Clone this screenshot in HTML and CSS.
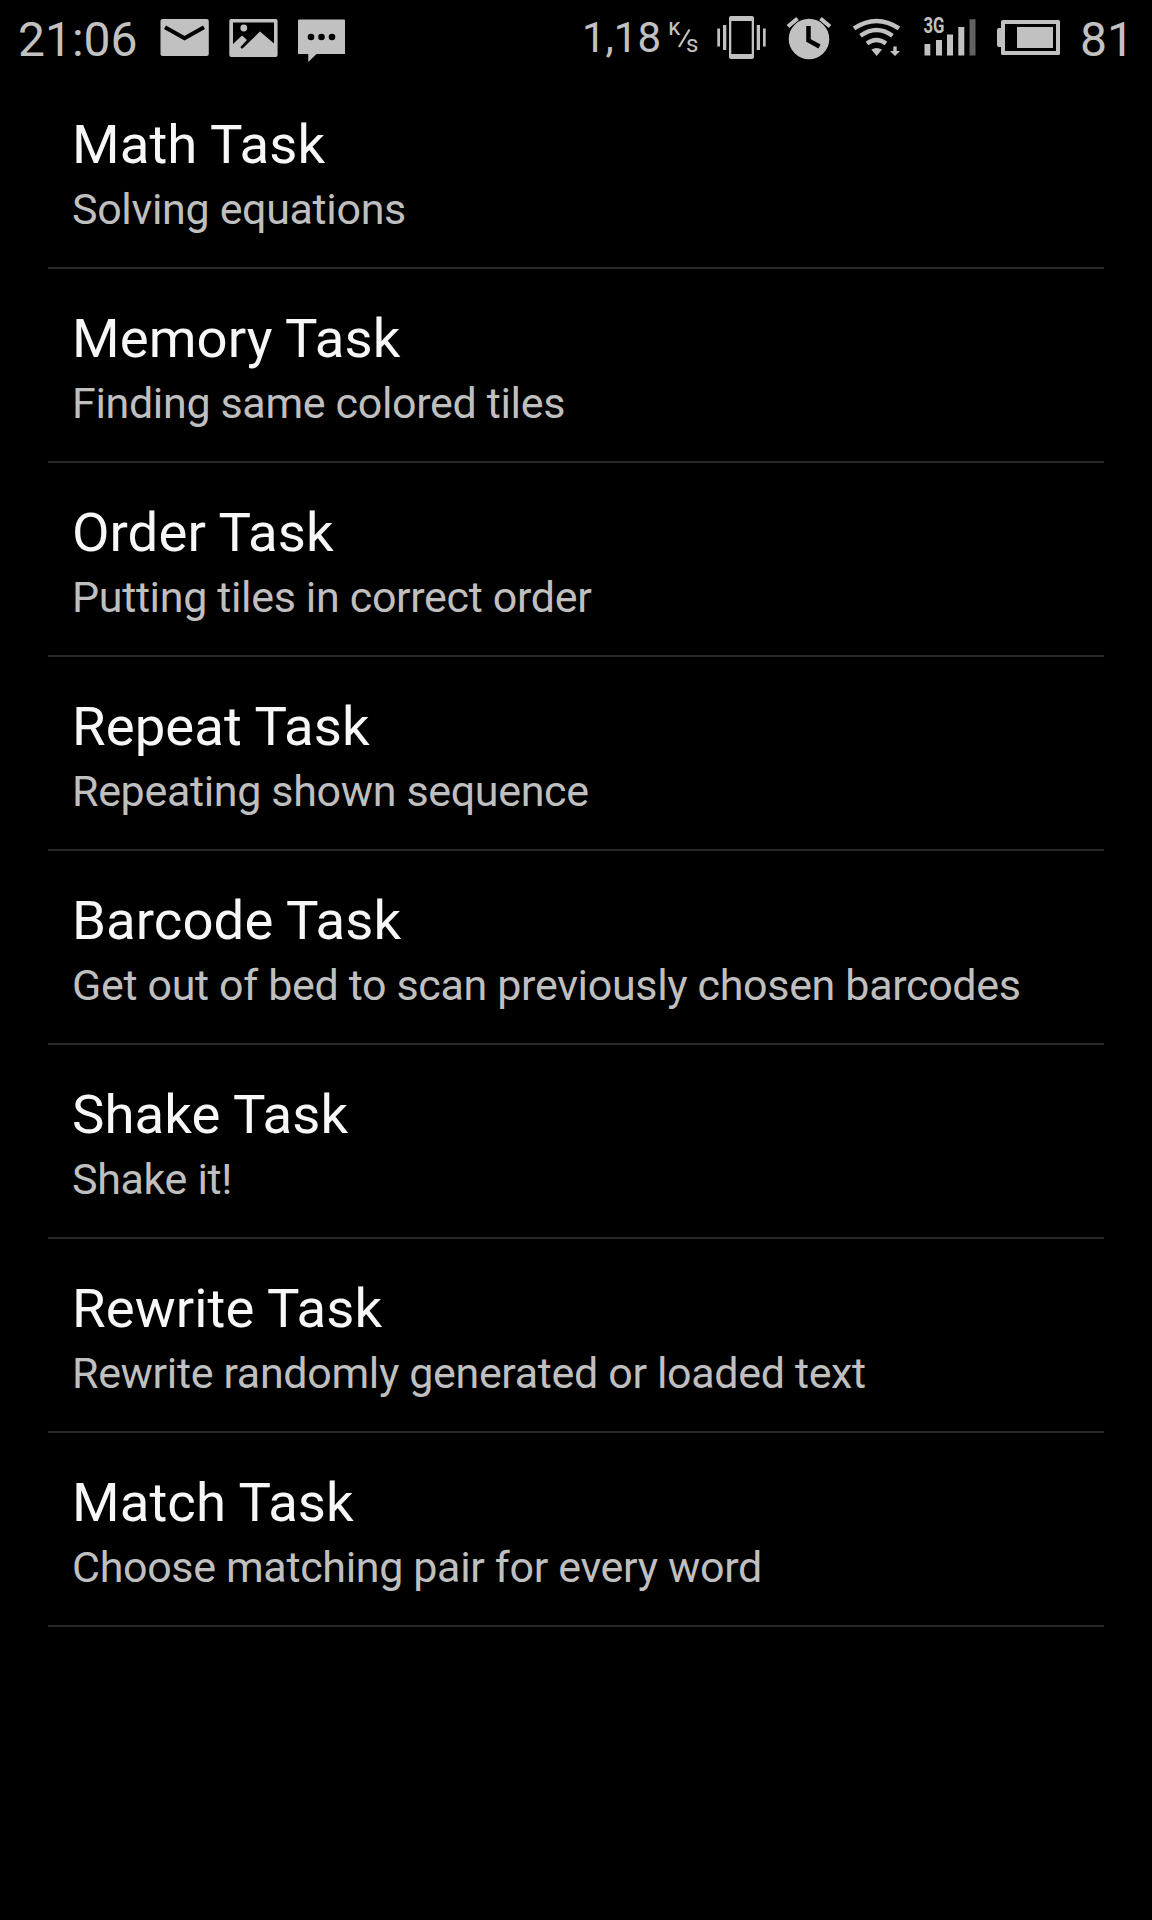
FILE: index.html
```html
<!DOCTYPE html>
<html lang="en">

<head>
    <meta charset="utf-8">
    <title>Tasks</title>
    <link rel="stylesheet" href="styles.css">
</head>

<body>
    <header class="status-bar">
        <div class="notifications">
            <span class="clock">21:06</span>
            <svg class="icon" width="49" height="76" viewBox="160 0 49 76">
                <rect x="160.5" y="19" width="48.3" height="37" rx="2" />
                <path class="cut-line" d="M165 27.2L184.5 38.3L204 27.2" stroke-width="4" />
            </svg>
            <svg class="icon" width="49" height="76" viewBox="229 0 49 76">
                <rect x="229.3" y="19" width="48.3" height="38" rx="2" />
                <path class="cut" d="M233 22.5H274V43.5L260 31.5L242.5 48.5Q241 49 240.5 47L247 40L242 35.5L233 44Z" />
                <circle cx="243.8" cy="28" r="3.4" />
            </svg>
            <svg class="icon" width="48" height="76" viewBox="298 0 48 76">
                <path d="M299 19.5H344Q345 19.5 345 20.5V54H316.5L308.3 62V54H298V20.5Q298 19.5 299 19.5Z" />
                <circle class="cut" cx="311" cy="37" r="3.3" />
                <circle class="cut" cx="321.5" cy="37" r="3.3" />
                <circle class="cut" cx="332" cy="37" r="3.3" />
            </svg>
        </div>
        <div class="system">
            <span class="speed">1,18</span>
            <svg class="icon" width="27" height="76" viewBox="669 0 27 76">
                <text class="unit" x="668.5" y="35">K</text>
                <path class="line" d="M679 47L689.5 29.5" stroke-width="2.2" />
                <text class="unit unit-time" x="686" y="52">s</text>
            </svg>
            <svg class="icon" width="48" height="76" viewBox="717 0 48 76">
                <path fill-rule="evenodd" d="M731 16H752Q754 16 754 18V57Q754 59 752 59H731Q729 59 729 57V18Q729 16 731 16ZM731.3 21V54H751.7V21Z" />
                <path d="M717.3 28.5H720V46.5H717.3ZM723 25H726.3V50H723ZM756.7 25H760V50H756.7ZM763 28.5H765.7V46.5H763Z" />
            </svg>
            <svg class="icon" width="46" height="76" viewBox="786 0 46 76">
                <circle cx="809" cy="39" r="20.3" />
                <path class="line" d="M788 26.5L797.5 18.5M830 26.5L820.5 18.5" stroke-width="4" />
                <path class="cut-line" d="M808.5 26V40.5L819.5 46.5" stroke-width="4.5" />
            </svg>
            <svg class="icon" width="50" height="76" viewBox="853 0 50 76">
                <path class="line" d="M854 28.3Q876.5 13.5 899 28.3M860.5 35.7Q876.5 24.5 892.5 35.7M867 43.5Q876.5 36.5 886 43.5" stroke-width="4.4" />
                <path d="M871.3 49.5Q876.5 46.5 882 49.5L876.7 56Z" />
                <path d="M893.3 46.5H896.7V51H900L895 56L890 51H893.3Z" />
            </svg>
            <svg class="icon" width="52" height="76" viewBox="924 0 52 76">
                <text class="network" x="923.5" y="32.5" textLength="21" lengthAdjust="spacingAndGlyphs">3G</text>
                <path d="M924.5 44H930.3V55.5H924.5ZM936 40H942V55.5H936ZM947 34.5H953V55.5H947ZM958.3 27H964.3V55.5H958.3Z" />
                <path class="dim" d="M969.5 19.3H975.5V55.5H969.5Z" />
            </svg>
            <svg class="icon" width="64" height="76" viewBox="997 0 64 76">
                <path fill-rule="evenodd" d="M1003 20H1058.5Q1060 20 1060 21.5V53.5Q1060 55 1058.5 55H1002.5Q1001 55 1001 53.5V47H999Q997 47 997 45V30Q997 28 999 28H1001V21.5Q1001 20 1003 20ZM1005 24V51H1056V24Z" />
                <rect x="1017" y="27" width="36" height="21" />
            </svg>
            <span class="battery">81</span>
        </div>
    </header>

    <main class="task-list">
        <div class="task">
            <h2>Math Task</h2>
            <p>Solving equations</p>
        </div>
        <div class="task">
            <h2>Memory Task</h2>
            <p>Finding same colored tiles</p>
        </div>
        <div class="task">
            <h2>Order Task</h2>
            <p>Putting tiles in correct order</p>
        </div>
        <div class="task">
            <h2>Repeat Task</h2>
            <p>Repeating shown sequence</p>
        </div>
        <div class="task">
            <h2>Barcode Task</h2>
            <p>Get out of bed to scan previously chosen barcodes</p>
        </div>
        <div class="task">
            <h2>Shake Task</h2>
            <p>Shake it!</p>
        </div>
        <div class="task">
            <h2>Rewrite Task</h2>
            <p>Rewrite randomly generated or loaded text</p>
        </div>
        <div class="task">
            <h2>Match Task</h2>
            <p>Choose matching pair for every word</p>
        </div>
    </main>
</body>

</html>
```
FILE: styles.css
```css
:root {
    --bg-color: #000;
    --title-color: #f7f7f7;
    --text-color: #bfbfbf;
    --status-color: #c1c1c1;
    --divider: #292929;
}

* {
    margin: 0;
    padding: 0;
    box-sizing: border-box;
}

body {
    font-family: Roboto, sans-serif;
    background: var(--bg-color);
    color: var(--text-color);
    height: 100vh;
    overflow: hidden;
}

.status-bar {
    height: 76px;
    padding: 0 26px 0 18px;
    display: flex;
    justify-content: space-between;
    color: var(--status-color);
    line-height: 79px;
    white-space: nowrap;
}

.notifications,
.system {
    display: flex;
}

.notifications {
    gap: 20px;
}

.system {
    gap: 21px;
}

.clock {
    width: 122px;
    font-size: 48px;
}

.speed {
    width: 87px;
    margin-right: -21px;
    font-size: 42px;
    line-height: 75px;
}

.battery {
    width: 46px;
    margin-left: -2px;
    font-size: 48px;
}

.icon {
    display: block;
    flex: none;
    overflow: visible;
    fill: var(--status-color);
}

.icon .cut {
    fill: var(--bg-color);
}

.icon .dim {
    fill: #626262;
}

.icon .line {
    fill: none;
    stroke: var(--status-color);
}

.icon .cut-line {
    fill: none;
    stroke: var(--bg-color);
}

.unit {
    font-size: 18.5px;
    font-weight: 500;
}

.unit-time {
    font-size: 24px;
    font-weight: 400;
}

.network {
    font-size: 22px;
    font-weight: 700;
}

.task-list {
    padding: 0 48px;
}

.task {
    height: 194px;
    padding: 38px 24px 0;
    border-bottom: 2px solid var(--divider);
    white-space: nowrap;
}

.task:first-child {
    height: 193px;
    padding-top: 37px;
}

.task h2 {
    font-size: 54.5px;
    font-weight: 400;
    line-height: 63px;
    letter-spacing: 0.08px;
    color: var(--title-color);
}

.task p {
    margin-top: 8px;
    font-size: 43px;
    line-height: 50px;
    letter-spacing: -0.34px;
}
```
